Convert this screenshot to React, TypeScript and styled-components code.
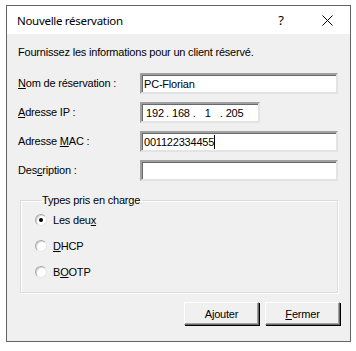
import styled, { createGlobalStyle } from 'styled-components'

const GlobalStyle = createGlobalStyle`
  html, body {
    margin: 0;
    padding: 0;
    background: #ffffff;
  }
  body {
    font-family: 'Liberation Sans', Arial, sans-serif;
    font-size: 11px;
    letter-spacing: -0.2px;
    color: #000;
  }
`

const Window = styled.div`
  box-sizing: border-box;
  margin: 5px 0 0 6px;
  width: 345px;
  height: 337px;
  border: 1px solid #646464;
  display: flex;
  flex-direction: column;
  background: #f0f0f0;
`

const TitleBar = styled.div`
  height: 28px;
  flex: none;
  background: #ffffff;
  display: flex;
  align-items: center;
  padding-left: 10px;
`

const Title = styled.div`
  flex: 1;
  font-family: 'Noto Sans', 'Open Sans', sans-serif;
  font-size: 11.5px;
  letter-spacing: -0.3px;
  color: #000;
  margin-top: 1px;
`

const CaptionButton = styled.div`
  width: 46px;
  height: 28px;
  display: flex;
  align-items: center;
  justify-content: center;
  font-family: 'Noto Sans', sans-serif;
  font-size: 13px;
  color: #000;
`

const Body = styled.div`
  flex: 1;
  padding: 12px 0 0 11px;
  display: flex;
  flex-direction: column;
`

const Intro = styled.div`
  line-height: 13px;
  height: 13px;
`

const Form = styled.div`
  margin-top: 14px;
  display: grid;
  grid-template-columns: 122px 198px;
  row-gap: 8px;
  align-items: center;
`

const Label = styled.label`
  line-height: 13px;
`

const Key = styled.span`
  text-decoration: underline;
  text-underline-offset: 1px;
`

const Field = styled.div<{ $width?: number }>`
  box-sizing: border-box;
  height: 21px;
  width: ${({ $width }) => ($width ? `${$width}px` : '100%')};
  background: #ffffff;
  border-style: solid;
  border-width: 2px;
  border-color: #a0a0a0 #e3e3e3 #e3e3e3 #a0a0a0;
  box-shadow: inset 1px 1px 0 #696969;
  padding: 0 1px 0 2px;
  display: flex;
  align-items: center;
  white-space: pre;
`

const Caret = styled.span`
  display: inline-block;
  width: 1px;
  height: 14px;
  background: #000;
`

const IpPart = styled.span<{ $width: number }>`
  display: inline-block;
  width: ${({ $width }) => $width}px;
  text-align: center;
`

const Group = styled.fieldset`
  box-sizing: border-box;
  margin: 13px 0 0 2px;
  width: 318px;
  height: 99px;
  border: 1px solid #dcdcdc;
  box-shadow: inset 1px 1px 0 #ffffff, 1px 1px 0 #ffffff;
  padding: 6px 0 0 14px;
  display: flex;
  flex-direction: column;
  gap: 13px;
`

const Legend = styled.legend`
  padding: 0 2px 0 1px;
  margin-left: 6px;
  line-height: 13px;
`

const RadioRow = styled.div`
  display: flex;
  align-items: center;
  gap: 6px;
  height: 13px;
`

const RadioDot = styled.span<{ $checked?: boolean }>`
  box-sizing: border-box;
  width: 12px;
  height: 12px;
  border-radius: 50%;
  background: #ffffff;
  border: 1px solid;
  border-color: #a8a8a8 #e6e6e6 #e6e6e6 #a8a8a8;
  box-shadow: inset 1px 1px 0 #d4d4d4;
  display: flex;
  align-items: center;
  justify-content: center;
  &::after {
    content: '';
    width: 4px;
    height: 4px;
    border-radius: 50%;
    background: ${({ $checked }) => ($checked ? '#000' : 'transparent')};
  }
`

const Buttons = styled.div`
  margin-top: 9px;
  display: flex;
  justify-content: flex-end;
  gap: 6px;
  padding-right: 10px;
`

const Button = styled.div<{ $default?: boolean }>`
  box-sizing: border-box;
  width: 75px;
  height: 23px;
  background: #f0f0f0;
  border: 1px solid;
  border-color: #ffffff #696969 #696969 #ffffff;
  box-shadow: ${({ $default }) =>
    $default ? '1px 1px 0 #000, inset -1px -1px 0 #a0a0a0' : 'inset -1px -1px 0 #a0a0a0, 1px 1px 0 #000'};
  display: flex;
  align-items: center;
  justify-content: center;
`

function Radio({ checked, children }: { checked?: boolean; children: React.ReactNode }) {
  return (
    <RadioRow>
      <RadioDot $checked={checked} />
      <span>{children}</span>
    </RadioRow>
  )
}

export default function App() {
  return (
    <>
      <GlobalStyle />
      <Window>
        <TitleBar>
          <Title>Nouvelle réservation</Title>
          <CaptionButton>?</CaptionButton>
          <CaptionButton>
            <svg width="11" height="11" viewBox="0 0 11 11">
              <path d="M0.5 0.5 L10.5 10.5 M10.5 0.5 L0.5 10.5" stroke="#000" strokeWidth="1" fill="none" />
            </svg>
          </CaptionButton>
        </TitleBar>
        <Body>
          <Intro>Fournissez les informations pour un client réservé.</Intro>
          <Form>
            <Label>
              <Key>N</Key>om de réservation :
            </Label>
            <Field>PC-Florian</Field>
            <Label>
              <Key>A</Key>dresse IP :
            </Label>
            <Field $width={120}>
              <IpPart $width={22}>192</IpPart>.<IpPart $width={24}>168</IpPart>.
              <IpPart $width={24}>1</IpPart>.<IpPart $width={24}>205</IpPart>
            </Field>
            <Label>
              Adresse <Key>M</Key>AC :
            </Label>
            <Field>
              001122334455
              <Caret />
            </Field>
            <Label>
              Des<Key>c</Key>ription :
            </Label>
            <Field />
          </Form>
          <Group>
            <Legend>Types pris en charge</Legend>
            <Radio checked>
              Les deu<Key>x</Key>
            </Radio>
            <Radio>
              <Key>D</Key>HCP
            </Radio>
            <Radio>
              B<Key>O</Key>OTP
            </Radio>
          </Group>
          <Buttons>
            <Button $default>
              <span>
                A<Key>j</Key>outer
              </span>
            </Button>
            <Button>
              <span>
                <Key>F</Key>ermer
              </span>
            </Button>
          </Buttons>
        </Body>
      </Window>
    </>
  )
}
